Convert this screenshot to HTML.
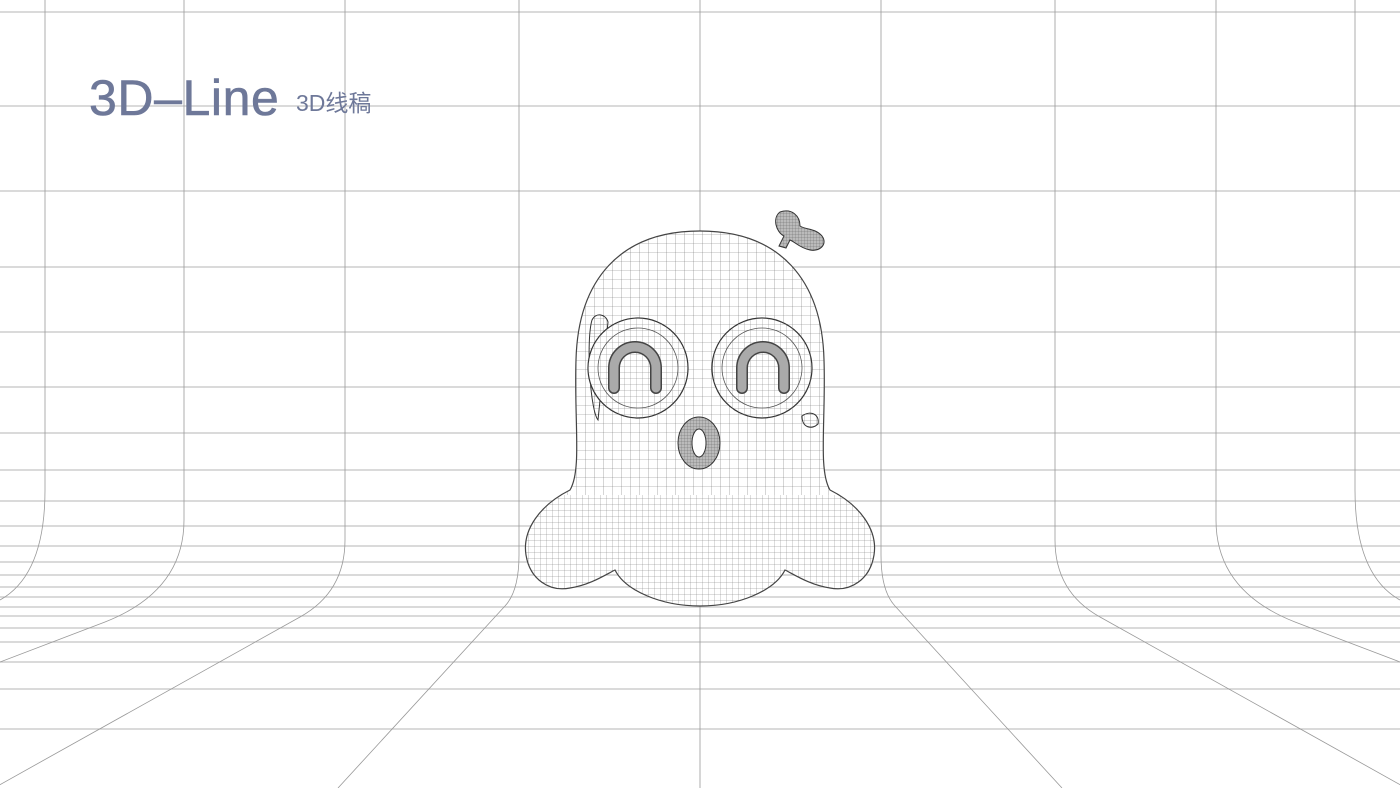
<!DOCTYPE html>
<html><head><meta charset="utf-8"><style>
html,body{margin:0;padding:0;background:#fff;}
body{width:1400px;height:788px;overflow:hidden;position:relative;font-family:"Liberation Sans","Noto Sans CJK SC",sans-serif;}
svg{position:absolute;left:0;top:0;}
.t1{position:absolute;left:89px;top:68px;font-size:50px;color:#6e7899;letter-spacing:0.6px;line-height:60px;-webkit-text-stroke:0.6px #6e7899;}
.t2{position:absolute;left:296px;top:88px;font-size:23px;color:#6e7899;line-height:30px;}
</style></head><body>
<svg width="1400" height="788" viewBox="0 0 1400 788">
<defs>
<pattern id="mesh" width="9" height="9" patternUnits="userSpaceOnUse">
<path d="M0 0H9M0 0V9" stroke="#777" stroke-width="0.6" fill="none"/>
</pattern>
<pattern id="meshf" width="6" height="6" patternUnits="userSpaceOnUse">
<path d="M0 0H6M0 0V6" stroke="#777" stroke-width="0.5" fill="none"/>
</pattern>
<pattern id="meshd" width="3" height="3" patternUnits="userSpaceOnUse">
<rect width="3" height="3" fill="#bbb"/>
<path d="M0 0H3M0 0V3" stroke="#666" stroke-width="0.5" fill="none"/>
</pattern>
<clipPath id="body"><path id="bp" d="M700 231 C780 231 822 280 824 360 C826 420 818 470 830 490 C860 505 878 530 874 555 C870 580 850 592 830 588 C810 585 795 575 785 570 C775 590 740 606 700 606 C660 606 625 590 615 570 C605 575 590 585 570 588 C550 592 530 580 526 555 C522 530 540 505 570 490 C582 470 574 420 576 360 C578 280 620 231 700 231 Z"/></clipPath>
</defs>
<g stroke="#c4c4c4" stroke-width="1.2" fill="none">
<path d="M0 12H1400M0 106H1400M0 191H1400M0 267H1400M0 332H1400M0 387H1400M0 433H1400M0 470H1400M0 501H1400M0 526H1400M0 546H1400M0 562H1400M0 575H1400M0 587H1400M0 597H1400M0 607H1400M0 616H1400M0 628H1400M0 642H1400M0 662H1400M0 689H1400M0 729H1400"/>
</g>
<g stroke="#999" stroke-width="0.8" fill="none">
<path d="M700 0V788"/>
<path d="M45 0V490Q45 575 0 600"/>
<path d="M184 0V520Q184 591 105 622L0 662"/>
<path d="M345 0V540Q345 592 300 617L-6 788"/>
<path d="M519 0V555Q519 591 505 606L338 788"/>
<path d="M1355 0V490Q1355 575 1400 600"/>
<path d="M1216 0V520Q1216 591 1295 622L1400 662"/>
<path d="M1055 0V540Q1055 592 1100 617L1406 788"/>
<path d="M881 0V555Q881 591 895 606L1062 788"/>
</g>
<rect x="520" y="225" width="360" height="385" fill="#fff" clip-path="url(#body)"/>
<g clip-path="url(#body)">
<rect x="520" y="225" width="360" height="270" fill="url(#mesh)"/>
<rect x="520" y="495" width="360" height="120" fill="url(#meshf)"/>
</g>
<use href="#bp" fill="none" stroke="#444" stroke-width="1.2"/>
<path d="M780 212 C792 208 800 216 800 226 C806 230 815 228 822 236 C828 244 820 252 810 250 C800 248 795 242 790 240 L786 248 L779 246 L784 236 C776 232 772 218 780 212 Z" fill="url(#meshd)" stroke="#333" stroke-width="1"/>
<g>
<path d="M592 320 C596 312 606 314 608 322 L598 420 C590 410 586 340 592 320 Z" fill="url(#meshf)" stroke="#333" stroke-width="1"/>
<circle cx="638" cy="368" r="50" fill="#fff" stroke="#333" stroke-width="1.2"/>
<circle cx="638" cy="368" r="50" fill="url(#meshf)"/>
<circle cx="638" cy="368" r="40" fill="none" stroke="#555" stroke-width="0.8"/>
<path d="M614 388V368A21 21 0 0 1 656 368V388" fill="none" stroke="#444" stroke-width="12" stroke-linecap="round"/>
<path d="M614 388V368A21 21 0 0 1 656 368V388" fill="none" stroke="#aaa" stroke-width="9" stroke-linecap="round"/>
<path d="M802 416 C810 410 820 414 818 424 C812 430 802 428 802 416 Z" fill="url(#meshf)" stroke="#333" stroke-width="1"/>
<circle cx="762" cy="368" r="50" fill="#fff" stroke="#333" stroke-width="1.2"/>
<circle cx="762" cy="368" r="50" fill="url(#meshf)"/>
<circle cx="762" cy="368" r="40" fill="none" stroke="#555" stroke-width="0.8"/>
<path d="M742 388V368A21 21 0 0 1 784 368V388" fill="none" stroke="#444" stroke-width="12" stroke-linecap="round"/>
<path d="M742 388V368A21 21 0 0 1 784 368V388" fill="none" stroke="#aaa" stroke-width="9" stroke-linecap="round"/>
</g>
<ellipse cx="699" cy="443" rx="21" ry="26" fill="url(#meshd)" stroke="#333" stroke-width="1"/>
<ellipse cx="699" cy="443" rx="7" ry="14" fill="#fff" stroke="#333" stroke-width="1"/>
</svg>
<div class="t1">3D–Line</div>
<div class="t2">3D线稿</div>
</body></html>
